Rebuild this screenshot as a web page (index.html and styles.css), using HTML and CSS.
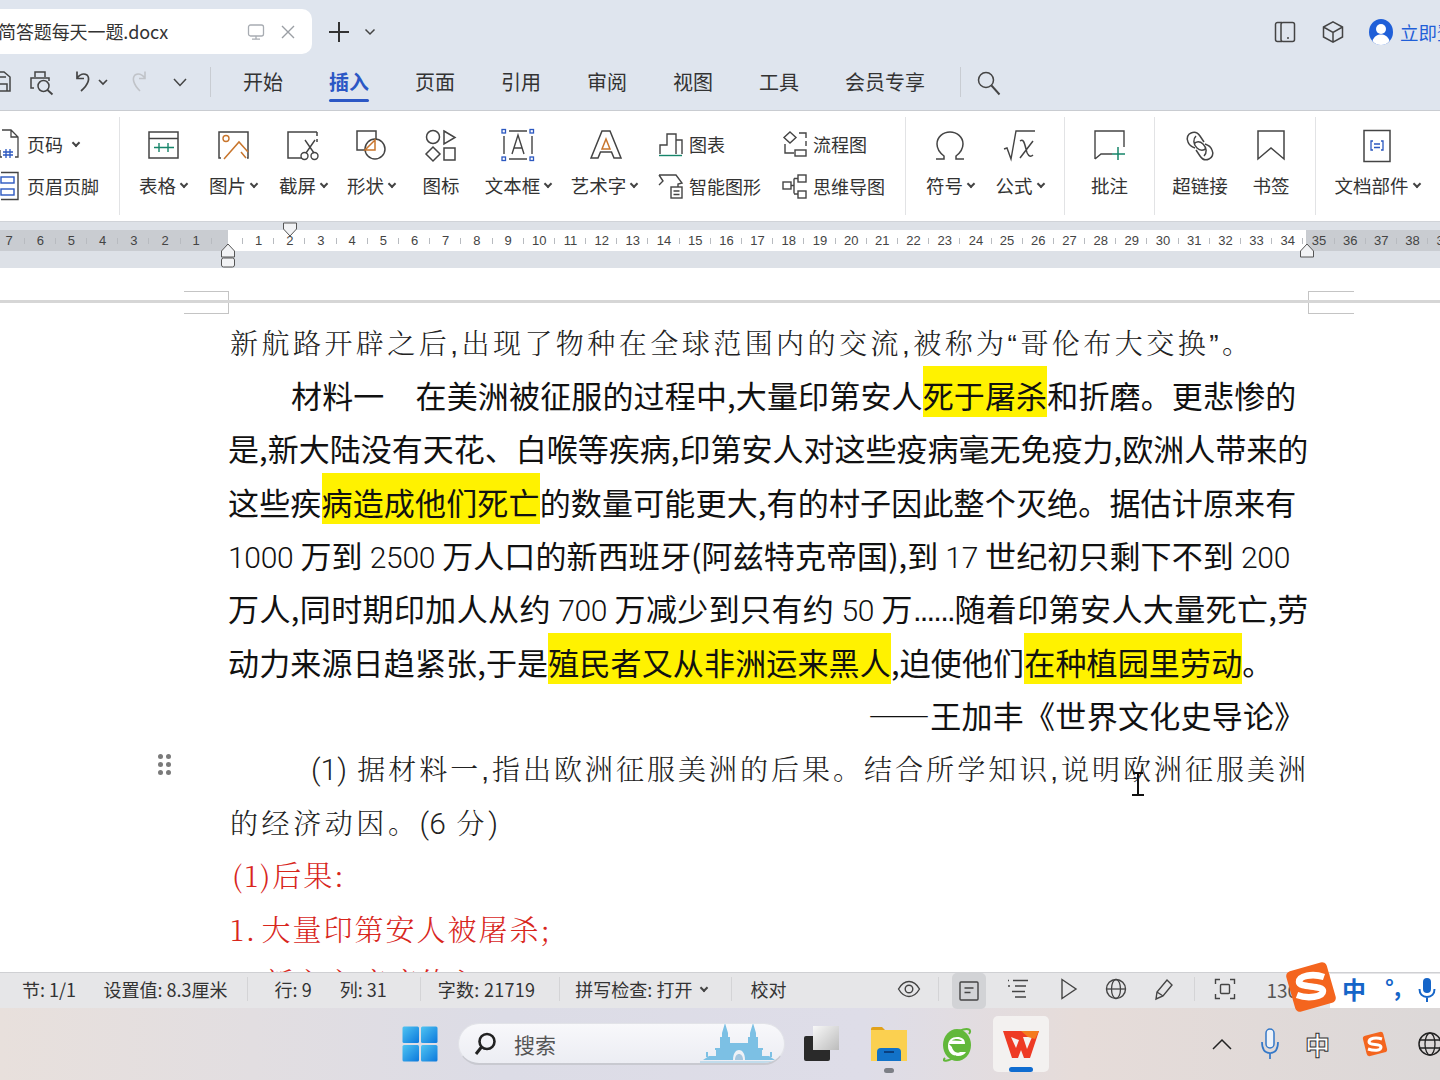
FILE: index.html
```html
<!DOCTYPE html>
<html lang="zh">
<head>
<meta charset="utf-8">
<title>简答题每天一题.docx</title>
<link rel="stylesheet" href="styles.css">
</head>
<body>
<div class="app">
  <header class="top">
    <div class="tabbar">
      <div class="tab">
        <span class="tab-name">简答题每天一题.docx</span>
        <svg class="tab-ico" width="18" height="18" viewBox="0 0 18 18"><rect x="1.500" y="2" width="15" height="11" rx="2" fill="none" stroke="#a8acb2" stroke-width="1.300"/><path d="M9 13v3M5 16.200h8" stroke="#a8acb2" stroke-width="1.300" fill="none"/></svg>
        <svg class="tab-ico tab-x" width="16" height="16" viewBox="0 0 16 16"><path d="M2 2l12 12M14 2L2 14" stroke="#9a9ea4" stroke-width="1.400"/></svg>
      </div>
      <svg class="plus" width="22" height="22" viewBox="0 0 22 22"><path d="M11 1v20M1 11h20" stroke="#333" stroke-width="2"/></svg>
      <svg class="caret-t" width="12" height="8" viewBox="0 0 12 8"><path d="M1.500 1.500L6 6l4.500-4.500" stroke="#444" stroke-width="1.500" fill="none"/></svg>
      <div class="tab-right">
        <svg width="24" height="24" viewBox="0 0 24 24"><path d="M9 2.500H4.500a2 2 0 00-2 2v15a2 2 0 002 2H9" fill="none" stroke="#444" stroke-width="1.500"/><rect x="8" y="2.500" width="13.500" height="19" rx="2" fill="none" stroke="#444" stroke-width="1.500"/><circle cx="15" cy="18" r="1" fill="#444"/></svg>
        <svg width="24" height="24" viewBox="0 0 24 24"><path d="M12 1.800l9.500 5.200v10L12 22.200 2.500 17V7zM2.500 7l9.500 5.500L21.500 7M12 12.500v9.700" fill="none" stroke="#444" stroke-width="1.500"/></svg>
        <svg class="avatar" width="24" height="26" viewBox="0 0 24 26"><ellipse cx="12" cy="13" rx="12" ry="13" fill="#1f5fd8"/><circle cx="12" cy="10" r="5" fill="#fff"/><path d="M3.500 22c1.500-5 5-6.500 8.500-6.500s7 1.500 8.500 6.500c-2 2.500-5 4-8.500 4s-6.500-1.500-8.500-4z" fill="#fff"/></svg>
        <span class="login">立即登录</span>
      </div>
    </div>
    <div class="menubar">
      <svg class="q q-save" width="12" height="24" viewBox="0 0 12 24"><path d="M-6 2h10l6 5v14H-6zM-2 21v-7H7v7M-1 2v5h7" fill="none" stroke="#444" stroke-width="1.500"/></svg>
      <svg class="q q-prev" width="26" height="26" viewBox="0 0 26 26"><path d="M6 7V2h10v5M5 18H2V8h18v3" fill="none" stroke="#444" stroke-width="1.500"/><circle cx="14.500" cy="16" r="5.500" fill="#dfe5ee" stroke="#444" stroke-width="1.500"/><path d="M18.500 20l5 4.500" stroke="#444" stroke-width="1.800"/></svg>
      <svg class="q q-undo" width="20" height="24" viewBox="0 0 20 24"><path d="M4 1.500v7h7M4 8c3-4 7-5 10-3 3 3 2 9-6 16" fill="none" stroke="#444" stroke-width="1.700"/></svg>
      <svg class="q q-c1" width="10" height="8" viewBox="0 0 10 8"><path d="M1 2l4 4 4-4" stroke="#444" stroke-width="1.700" fill="none"/></svg>
      <svg class="q q-redo" width="18" height="24" viewBox="0 0 18 24"><path d="M15 1.500v7H9M15 8C12 4 8 3 5 5c-3 3-2 9 5 16" fill="none" stroke="#c0c3c8" stroke-width="1.600"/></svg>
      <svg class="q q-c2" width="14" height="9" viewBox="0 0 14 9"><path d="M1 1l6 6.500L13 1" stroke="#444" stroke-width="1.500" fill="none"/></svg>
      <span class="vsep vsep-a"></span>
      <nav class="menus">
        <span>开始</span><span class="on">插入</span><span>页面</span><span>引用</span><span>审阅</span><span>视图</span><span>工具</span><span>会员专享</span>
      </nav>
      <span class="vsep vsep-b"></span>
      <svg class="q-search" width="26" height="26" viewBox="0 0 26 26"><circle cx="10" cy="10" r="7.500" fill="none" stroke="#444" stroke-width="1.500"/><path d="M15.500 15.500l8 9" stroke="#444" stroke-width="1.900"/></svg>
    </div>
  </header>

  <section class="ribbon">
    <div class="g g0">
      <div class="sm sm-a">
        <svg class="ico-s clip" width="22" height="32" viewBox="0 0 22 32"><path d="M4 2h9l7 7v20h-3M13 2v7h7M2 22v7h2" fill="none" stroke="#444" stroke-width="1.300"/><path d="M8 21v9M12 21v9M5 24h10M5 27h10" stroke="#2c58c0" stroke-width="1.300"/></svg>
        <span>页码</span><i class="c c-a"></i>
      </div>
      <div class="sm sm-b">
        <svg class="ico-s clip2" width="22" height="32" viewBox="0 0 22 32"><path d="M2 2.500h17v27H2" fill="none" stroke="#444" stroke-width="1.400"/><rect x="2" y="7" width="13" height="6" fill="none" stroke="#2c58c0" stroke-width="1.400"/><rect x="2" y="19" width="13" height="6" fill="none" stroke="#2c58c0" stroke-width="1.400"/></svg>
        <span>页眉页脚</span>
      </div>
    </div>
    <div class="g g1">
      <div class="ri w70"><svg width="36" height="36" viewBox="0 0 36 36"><rect x="4" y="4" width="29" height="26" fill="none" stroke="#444" stroke-width="1.500"/><path d="M4 10.500h29" stroke="#444" stroke-width="1.500"/><path d="M9 19.500h20M14 15v9M23 15v9" stroke="#16856a" stroke-width="1.400"/></svg><label>表格<i class="c"></i></label></div>
      <div class="ri w70"><svg width="36" height="36" viewBox="0 0 36 36"><path d="M6 30H4V4h29v26h-1" fill="none" stroke="#444" stroke-width="1.500"/><circle cx="11" cy="10.500" r="3" fill="none" stroke="#c8752c" stroke-width="1.400"/><path d="M9 31L24 14l9 10M26 24l5 6" fill="none" stroke="#c8752c" stroke-width="1.500"/></svg><label>图片<i class="c"></i></label></div>
      <div class="ri w70"><svg width="36" height="36" viewBox="0 0 36 36"><path d="M17 30H3V4h29M32 4v4M32 11v3M7 30h1M11 30h1" fill="none" stroke="#444" stroke-width="1.500"/><path d="M20 12l9 13M30 12l-9 13" stroke="#444" stroke-width="1.400"/><circle cx="19.500" cy="28" r="3.500" fill="none" stroke="#444" stroke-width="1.400"/><circle cx="29.500" cy="28" r="3.500" fill="none" stroke="#444" stroke-width="1.400"/></svg><label>截屏<i class="c"></i></label></div>
      <div class="ri w66"><svg width="36" height="36" viewBox="0 0 36 36"><path d="M12 22H4V3h19v9" fill="none" stroke="#444" stroke-width="1.500"/><circle cx="22" cy="21" r="10" fill="none" stroke="#444" stroke-width="1.500"/><path d="M22 12v10H12z" fill="#fff" stroke="#c8752c" stroke-width="1.500"/></svg><label>形状<i class="c"></i></label></div>
      <div class="ri w74"><svg width="36" height="36" viewBox="0 0 36 36"><circle cx="10" cy="9" r="6.500" fill="none" stroke="#444" stroke-width="1.500"/><path d="M21 3l11 6.500L21 16zM10 19l7 7-7 7-7-7zM21 20h11v12H21z" fill="none" stroke="#444" stroke-width="1.500"/></svg><label>图标</label></div>
      <div class="ri w80"><svg width="36" height="36" viewBox="0 0 36 36"><path d="M9 3h18M9 31h18M4 8v18M32 8v18" fill="none" stroke="#444" stroke-width="1.400"/><path d="M12 26l6-19 6 19M14 20h8" fill="none" stroke="#444" stroke-width="1.400"/><g fill="#fff" stroke="#2c58c0" stroke-width="1.300"><rect x="2" y="1.500" width="3.500" height="3.500"/><rect x="30" y="1.500" width="3.500" height="3.500"/><rect x="2" y="29" width="3.500" height="3.500"/><rect x="30" y="29" width="3.500" height="3.500"/></g></svg><label>文本框<i class="c"></i></label></div>
      <div class="ri w92"><svg class="sh4" width="36" height="36" viewBox="0 0 36 36"><path d="M3 30L14 3h8l11 27h-7l-2.500-6h-11L10 30z" fill="none" stroke="#444" stroke-width="1.500"/><path d="M18 11l4 10h-8z" fill="none" stroke="#c8752c" stroke-width="1.500"/></svg><label>艺术字<i class="c"></i></label></div>
      <div class="two two-a">
        <div class="sm"><svg class="ico-m" width="26" height="26" viewBox="0 0 26 26"><path d="M2 23v-9h7V3h9v20M18 9h6v14" fill="none" stroke="#444" stroke-width="1.400"/><path d="M1 24.500h23" stroke="#16856a" stroke-width="1.400"/></svg><span>图表</span></div>
        <div class="sm"><svg class="ico-m" width="26" height="26" viewBox="0 0 26 26"><path d="M1 2h17l6 8-4 1v3M1 2l4 6-4 4" fill="none" stroke="#444" stroke-width="1.400"/><rect x="13" y="14" width="11" height="11" fill="none" stroke="#444" stroke-width="1.400"/><path d="M15.500 18h6M15.500 21.500h6" stroke="#444" stroke-width="1.300"/></svg><span>智能图形</span></div>
      </div>
      <div class="two two-b">
        <div class="sm"><svg class="ico-m" width="26" height="26" viewBox="0 0 26 26"><path d="M8 1l6 5.500L8 12 2 6.500z" fill="none" stroke="#444" stroke-width="1.400"/><path d="M3 13v9h9M17 2h7v5M24 10v5" fill="none" stroke="#444" stroke-width="1.400"/><rect x="13" y="19" width="11" height="6" fill="none" stroke="#444" stroke-width="1.400"/></svg><span>流程图</span></div>
        <div class="sm"><svg class="ico-m" width="26" height="26" viewBox="0 0 26 26"><rect x="1" y="9" width="8" height="7" fill="none" stroke="#444" stroke-width="1.400"/><rect x="16" y="2" width="8" height="7" fill="none" stroke="#444" stroke-width="1.400"/><rect x="16" y="18" width="8" height="7" fill="none" stroke="#444" stroke-width="1.400"/><path d="M9 12.500h3M12 5.500v15M12 5.500h4M12 21h4" fill="none" stroke="#444" stroke-width="1.400"/></svg><span>思维导图</span></div>
      </div>
    </div>
    <div class="g g2">
      <div class="ri w70"><svg width="36" height="36" viewBox="0 0 36 36"><path d="M4 31h8v-3c-4-3-7-7-7-12 0-7 6-12 13-12s13 5 13 12c0 5-3 9-7 12v3h8" fill="none" stroke="#444" stroke-width="1.500"/></svg><label>符号<i class="c"></i></label></div>
      <div class="ri w69"><svg width="36" height="36" viewBox="0 0 36 36"><path d="M2 21l3-1 4 11 5-28h19" fill="none" stroke="#444" stroke-width="1.400"/><path d="M18 13c3-2 4 0 6 8 1 6 4 9 7 6M31 13L18 30" fill="none" stroke="#444" stroke-width="1.500"/></svg><label>公式<i class="c"></i></label></div>
    </div>
    <div class="g g3">
      <div class="ri w89"><svg width="36" height="36" viewBox="0 0 36 36"><path d="M3 31V3h29v16M20 26H9l-6 5" fill="none" stroke="#444" stroke-width="1.400"/><path d="M26 19v13M20 26h13" stroke="#16856a" stroke-width="1.500"/></svg><label>批注</label></div>
    </div>
    <div class="g g4">
      <div class="ri w72"><svg width="36" height="36" viewBox="0 0 36 36"><path d="M13 20c-3-1-6-3-7-6-2-4 0-8 3-9 4-2 7 0 9 3l4 6M23 16c3 1 6 3 7 6 2 4 0 8-3 9-4 2-7 0-9-3l-4-6M14 8c-3 3-3 8 1 12 3 3 7 3 9 0M22 28c3-3 3-8-1-12-3-3-7-3-9 0" fill="none" stroke="#444" stroke-width="1.500"/></svg><label>超链接</label></div>
      <div class="ri w70"><svg width="36" height="36" viewBox="0 0 36 36"><path d="M5 3h26v28L18 20 5 31z" fill="none" stroke="#444" stroke-width="1.500"/></svg><label>书签</label></div>
    </div>
    <div class="g g5">
      <div class="ri w122"><svg width="36" height="36" viewBox="0 0 36 36"><rect x="5" y="2.500" width="26" height="31" fill="none" stroke="#444" stroke-width="1.500"/><path d="M14 13h-2v9h2M22 13h2v9h-2M15 16h6M15 19.500h6" fill="none" stroke="#2c58c0" stroke-width="1.300"/></svg><label>文档部件<i class="c"></i></label></div>
    </div>
  </section>

  <section class="ruler">
    <div class="band">
      <div class="ticks">
        <span>7</span><span>6</span><span>5</span><span>4</span><span>3</span><span>2</span><span>1</span><span></span><span>1</span><span>2</span><span>3</span><span>4</span><span>5</span><span>6</span><span>7</span><span>8</span><span>9</span><span>10</span><span>11</span><span>12</span><span>13</span><span>14</span><span>15</span><span>16</span><span>17</span><span>18</span><span>19</span><span>20</span><span>21</span><span>22</span><span>23</span><span>24</span><span>25</span><span>26</span><span>27</span><span>28</span><span>29</span><span>30</span><span>31</span><span>32</span><span>33</span><span>34</span><span>35</span><span>36</span><span>37</span><span>38</span><span>39</span>
      </div>
    </div>
    <svg class="mk mk-top" width="16" height="15" viewBox="0 0 16 15"><path d="M1.500 1h13v6L8 14 1.500 7z" fill="#f2f3f5" stroke="#555" stroke-width="1"/></svg>
    <svg class="mk mk-left" width="16" height="25" viewBox="0 0 16 25"><path d="M1.500 14V8L8 1l6.500 7v6z" fill="#f2f3f5" stroke="#555"/><rect x="1.500" y="15" width="13" height="9" rx="2" fill="#f2f3f5" stroke="#555"/></svg>
    <svg class="mk mk-right" width="16" height="15" viewBox="0 0 16 15"><path d="M1.500 14V8L8 1l6.500 7v6z" fill="#f2f3f5" stroke="#555"/></svg>
  </section>

  <main class="doc">
    <div class="mark mark-l"></div>
    <div class="mark mark-r"></div>
    <div class="page-line"></div>
    <div class="drag"><i></i><i></i><i></i><i></i><i></i><i></i></div>
    <svg class="ibeam" width="14" height="24" viewBox="0 0 14 24"><path d="M2 1h10M7 1v22M1 23h12" stroke="#111" stroke-width="2" fill="none"/></svg>
    <div class="lines">
      <p class="ln thin l1">新航路开辟之后<span class="lat">,</span>出现了物种在全球范围内的交流<span class="lat">,</span>被称为<span class="lat">“</span>哥伦布大交换<span class="lat">”</span>。</p>
      <p class="ln l2">材料一　在美洲被征服的过程中,大量印第安人<span class="hl">死于屠杀</span>和折磨。更悲惨的</p>
      <p class="ln l3">是,新大陆没有天花、白喉等疾病,印第安人对这些疫病毫无免疫力,欧洲人带来的</p>
      <p class="ln l4">这些疾<span class="hl">病造成他们死亡</span>的数量可能更大,有的村子因此整个灭绝。据估计原来有</p>
      <p class="ln l5"><span class="n">1000</span> 万到 <span class="n">2500</span> 万人口的新西班牙(阿兹特克帝国),到 <span class="n">17</span> 世纪初只剩下不到 <span class="n">200</span></p>
      <p class="ln l3">万人,同时期印加人从约 <span class="n">700</span> 万减少到只有约 <span class="n">50</span> 万<span class="dots">......</span>随着印第安人大量死亡,劳</p>
      <p class="ln l7">动力来源日趋紧张,于是<span class="hl">殖民者又从非洲运来黑人</span>,迫使他们<span class="hl">在种植园里劳动</span>。</p>
      <p class="ln l8">——王加丰《世界文化史导论》</p>
      <p class="ln thin l9"><span class="n">(1)</span> 据材料一<span class="lat">,</span>指出欧洲征服美洲的后果。结合所学知识<span class="lat">,</span>说明欧洲征服美洲</p>
      <p class="ln thin l10">的经济动因。<span class="n">(6</span> 分<span class="n">)</span></p>
      <p class="ln red l11">(1)后果:</p>
      <p class="ln red l12">1. 大量印第安人被屠杀;</p>
      <p class="ln red l12">2. 新六六疾病传入;</p>
    </div>
  </main>

  <footer class="status">
    <span class="st s1">节: 1/1</span>
    <span class="st s2">设置值: 8.3厘米</span>
    <span class="st s3">行: 9</span>
    <span class="st s4">列: 31</span>
    <span class="st s5">字数: 21719</span>
    <span class="st s6">拼写检查: 打开<i class="c c-st"></i></span>
    <span class="st s7">校对</span>
    <svg class="sico i-eye" width="24" height="18" viewBox="0 0 24 18"><path d="M1.500 9C5 3 9 1.500 12 1.500S19 3 22.500 9C19 15 15 16.500 12 16.500S5 15 1.500 9z" fill="none" stroke="#444" stroke-width="1.400"/><circle cx="12" cy="9" r="3.800" fill="none" stroke="#444" stroke-width="1.400"/></svg>
    <span class="stsep sep-a"></span>
    <div class="st-active"><svg width="20" height="20" viewBox="0 0 20 20"><rect x="1" y="1" width="18" height="18" rx="1" fill="none" stroke="#444" stroke-width="1.400"/><path d="M5.500 7h9M5.500 11.500h6" stroke="#444" stroke-width="1.400"/></svg></div>
    <svg class="sico i-list" width="22" height="20" viewBox="0 0 22 20"><path d="M6 1.500h15M1 7h2M8 7h11M5 12.500h13M8 18h11M1 1.500h1" stroke="#444" stroke-width="1.400"/></svg>
    <svg class="sico i-play" width="18" height="22" viewBox="0 0 18 22"><path d="M2 1.500L16 11 2 20.500z" fill="none" stroke="#444" stroke-width="1.400"/></svg>
    <svg class="sico i-globe" width="22" height="22" viewBox="0 0 22 22"><circle cx="11" cy="11" r="9.500" fill="none" stroke="#444" stroke-width="1.400"/><ellipse cx="11" cy="11" rx="4.500" ry="9.500" fill="none" stroke="#444" stroke-width="1.300"/><path d="M1.500 11h19" stroke="#444" stroke-width="1.300"/></svg>
    <svg class="sico i-pen" width="22" height="24" viewBox="0 0 22 24"><path d="M14 3l5 5-9 11-7 3 1-7zM4 15l6 4" fill="none" stroke="#444" stroke-width="1.400"/></svg>
    <span class="stsep sep-b"></span>
    <svg class="sico i-fit" width="22" height="22" viewBox="0 0 22 22"><path d="M1.500 6V1.500H6M16 1.500h4.500V6M20.500 16v4.500H16M6 20.500H1.500V16" fill="none" stroke="#444" stroke-width="1.400"/><rect x="6.500" y="6.500" width="9" height="9" rx="1" fill="none" stroke="#444" stroke-width="1.400"/></svg>
    <span class="st s8">130%</span>
    <div class="ime">
      <span class="ime-zh">中</span>
      <span class="ime-p">°,</span>
      <svg class="ime-mic" width="18" height="26" viewBox="0 0 18 26"><rect x="5" y="1" width="8" height="15" rx="4" fill="#1565c8"/><path d="M1.500 12c0 5 3 8 7.500 8s7.500-3 7.500-8M9 20v5" fill="none" stroke="#1565c8" stroke-width="2"/></svg>
    </div>
    <svg class="sogou" width="50" height="50" viewBox="0 0 50 50"><rect x="4" y="4" width="42" height="42" rx="5" transform="rotate(-16 25 25)" fill="#f4651e"/><path d="M38 15C26 11 13 14 13 20c0 6 24 3 24 9 0 6-15 8-26 4" fill="none" stroke="#fff" stroke-width="6.500"/></svg>
  </footer>

  <div class="taskbar">
    <svg class="win" width="36" height="36" viewBox="0 0 36 36"><defs><linearGradient id="wg" x1="0" y1="0" x2="1" y2="1"><stop offset="0" stop-color="#4fc4f2"/><stop offset="1" stop-color="#0b78dc"/></linearGradient></defs><rect x="0.500" y="0.500" width="16.500" height="16.500" rx="1.500" fill="url(#wg)"/><rect x="19" y="0.500" width="16.500" height="16.500" rx="1.500" fill="url(#wg)"/><rect x="0.500" y="19" width="16.500" height="16.500" rx="1.500" fill="url(#wg)"/><rect x="19" y="19" width="16.500" height="16.500" rx="1.500" fill="url(#wg)"/></svg>
    <div class="search">
      <svg width="26" height="26" viewBox="0 0 26 26"><circle cx="14" cy="10.500" r="7.500" fill="none" stroke="#222" stroke-width="2.600"/><path d="M8.500 16L3 23" stroke="#222" stroke-width="3"/></svg>
      <span>搜索</span>
      <svg class="sky" width="84" height="42" viewBox="0 0 84 42"><g fill="#7cc0e4"><path d="M25 1l3 10v4h2v23h-10V15h2v-4zM53 1l3 10v4h2v23H48V15h2v-4z"/><path d="M30 21h18v17H30z"/><path d="M3 38l6-4h7v-6h-1v-2h5v12zM75 38l-6-4h-7v-6h1v-2h-5v12z"/><rect x="6" y="30" width="2" height="5"/><rect x="70" y="30" width="2" height="5"/></g><path d="M33 38c0-7 3-10 6-10s6 3 6 10z" fill="#eef1f6"/><path d="M35 38c0-4 2-6 4-6s4 2 4 6z" fill="#5a9cc8" opacity=".5"/><path d="M0 40h76" stroke="#b3d6ea" stroke-width="1.500"/></svg>
    </div>
    <div class="app-ico a-desk"><i class="d1"></i><i class="d2"></i></div>
    <div class="app-ico a-folder"><svg width="36" height="36" viewBox="0 0 36 36"><path d="M0 3a2 2 0 012-2h9l4 4H0z" fill="#e2a21a"/><rect x="0" y="4" width="36" height="31" fill="#fbd050"/><path d="M6 35v-9a4 4 0 014-4h16a4 4 0 014 4v9z" fill="#1272c8"/><path d="M13 26h10" stroke="#0a3f7e" stroke-width="2"/></svg><b class="pip"></b></div>
    <div class="app-ico a-ie"><svg width="36" height="38" viewBox="0 0 36 38"><ellipse cx="18" cy="20" rx="14" ry="16" fill="#62b83a"/><path d="M10 19h16c0-5-3-7-8-7s-9 3-9 9 4 10 10 10c4 0 7-2 8-4h-6c-1 1-4 1-6-1-1-1-2-3-2-4z M13 15.500c1-1 3-1.500 5-1.500 3 0 4 1 5 2z" fill="#fff" fill-rule="evenodd"/><path d="M6 33C2 37 9 37 17 31M30 9c3-4 0-7-10-3" fill="none" stroke="#62b83a" stroke-width="2"/></svg></div>
    <div class="app-ico a-wps"><svg width="38" height="30" viewBox="0 0 38 30"><path d="M1 2h36l-9 27h-6l-3-8-3 8h-6z" fill="#ee3a24"/><path d="M9 8l5 11 3-8zM21 8h9l-5 12z" fill="#f4f2f1"/><path d="M19 2h18l-4 8-7-2z" fill="#f47b20"/></svg><b class="active-bar"></b></div>
    <div class="tray">
      <svg class="t-up" width="20" height="12" viewBox="0 0 20 12"><path d="M1 11l9-9 9 9" fill="none" stroke="#222" stroke-width="1.500"/></svg>
      <svg class="t-mic" width="20" height="32" viewBox="0 0 20 32"><rect x="6" y="1" width="8" height="19" rx="4" fill="#eef3fa" stroke="#3478c8" stroke-width="1.500"/><path d="M2 14c0 7 3 11 8 11s8-4 8-11M10 25v6" fill="none" stroke="#3478c8" stroke-width="1.700"/></svg>
      <span class="t-zh">中</span>
      <svg class="t-s" width="26" height="26" viewBox="0 0 26 26"><rect x="2.500" y="2.500" width="21" height="21" rx="3" transform="rotate(-14 13 13)" fill="#f4651e"/><path d="M20 8c-6-2-13-1-13 3s12 1 12 5-7 4-13 2" fill="none" stroke="#fff" stroke-width="3"/></svg>
      <svg class="t-g" width="26" height="26" viewBox="0 0 26 26"><circle cx="13" cy="13" r="11" fill="none" stroke="#222" stroke-width="1.500"/><ellipse cx="13" cy="13" rx="5" ry="11" fill="none" stroke="#222" stroke-width="1.300"/><path d="M2 9h22M2 17h22" stroke="#222" stroke-width="1.300"/></svg>
    </div>
  </div>
</div>
</body>
</html>
```
FILE: styles.css
```css
* { box-sizing: border-box; }
html, body { margin: 0; padding: 0; }
body { width: 1440px; height: 1080px; overflow: hidden; font-family: "Noto Sans CJK SC", "Noto Sans", sans-serif; color: #333; }
p { margin: 0; }
i, b { display: block; }
label { display: block; }
.app { width: 1440px; height: 1080px; display: flex; flex-direction: column; overflow: hidden; }

/* title + menu */
.top { height: 111px; background: #dfe5ee; border-bottom: 1px solid #c9ccd1; flex: none; }
.tabbar { height: 54px; display: flex; align-items: center; padding-top: 9px; }
.tab { width: 312px; height: 45px; background: #fff; border-radius: 0 10px 10px 0; display: flex; align-items: center; overflow: hidden; }
.tab-name { font-size: 18px; width: 249px; margin-left: -2px; white-space: nowrap; flex: none; color: #333; letter-spacing: -0.100px; margin-top: -2px; }
.tab-ico { flex: none; }
.tab-x { margin-left: 15px; }
.plus { margin-left: 16px; flex: none; }
.caret-t { margin-left: 14px; flex: none; }
.tab-right { margin-left: auto; display: flex; align-items: center; width: 167px; gap: 24px; overflow: hidden; flex: none; height: 30px; white-space: nowrap; }
.tab-right svg { flex: none; }
.tab-right .avatar { margin-right: -17px; }
.login { font-size: 18.500px; color: #1f5fd8; flex: none; }
.menubar { height: 56px; display: flex; align-items: center; }
.q { flex: none; }
.q-prev { margin-left: 17px; margin-top: 2px; }
.q-undo { margin-left: 18px; }
.q-c1 { margin-left: 5px; }
.q-redo { margin-left: 22px; }
.q-c2 { margin-left: 25px; }
.vsep { width: 1px; height: 30px; background: #c8ccd2; flex: none; }
.vsep-a { margin-left: 23px; }
.menus { display: flex; gap: 46px; margin-left: 32px; font-size: 20px; color: #333; flex: none; }
.menus span { display: block; line-height: 56px; height: 56px; position: relative; }
.menus .on { color: #2b57c5; font-weight: 700; }
.menus .on::after { content: ""; position: absolute; left: 0; right: 0; bottom: 8px; height: 3px; background: #2b57c5; border-radius: 2px; }
.vsep-b { margin-left: 35px; }
.q-search { margin-left: 15px; flex: none; margin-top: 2px; }

/* ribbon */
.ribbon { height: 111px; background: #fff; display: flex; flex: none; padding-top: 6px; padding-bottom: 7px; border-bottom: 1px solid #d0d3d8; }
.g { border-right: 1px solid #e2e3e5; height: 98px; display: flex; flex: none; padding-top: 11px; }
.g0 { width: 120px; flex-direction: column; padding-top: 6px; overflow: hidden; }
.g1 { width: 786px; padding-left: 8px; }
.g2 { width: 159px; padding-left: 9px; }
.g3 { width: 90px; }
.g4 { width: 161px; padding-left: 9px; }
.g5 { width: 124px; border-right: 0; }
.ri { display: flex; flex-direction: column; align-items: center; flex: none; font-size: 18.500px; color: #333; }
.ri label { margin-top: 8px; line-height: 26px; height: 26px; white-space: nowrap; display: flex; align-items: center; }
.w66 { width: 66px; } .w69 { width: 69px; } .w70 { width: 70px; } .w72 { width: 72px; } .w74 { width: 74px; } .w80 { width: 80px; } .w89 { width: 89px; } .w92 { width: 92px; } .w122 { width: 122px; }
.c { width: 6px; height: 6px; border-right: 2px solid #444; border-bottom: 2px solid #444; transform: rotate(45deg); margin: -3px 0 0 5px; flex: none; }
.c-a { margin-left: 10px; }
.sm { display: flex; align-items: center; font-size: 18px; height: 42px; white-space: nowrap; color: #333; }
.ico-s { flex: none; margin-right: 4px; }
.clip { margin-left: -2px; margin-right: 7px; }
.clip2 { margin-left: -1px; margin-right: 6px; }
.sh4 { flex: none; margin-left: 4px; }
.two { display: flex; flex-direction: column; flex: none; margin-top: -5px; }
.two-a { width: 124px; margin-left: 8px; }
.two-b { width: 123px; }
.ico-m { flex: none; margin-right: 5px; }

/* ruler */
.ruler { height: 46px; background: #dde1e7; flex: none; padding-top: 8px; position: relative; }
.band { height: 21px; overflow: hidden; background: linear-gradient(to right, #c9ccd1 228px, #fff 228px, #fff 1306px, #c9ccd1 1306px); }
.ticks { display: flex; margin-left: -6.500px; height: 21px; }
.ticks span { flex: none; width: 31.200px; text-align: center; font-size: 13px; line-height: 22px; color: #444; position: relative; font-family: "Liberation Sans", sans-serif; }
.ticks span::after { content: ""; position: absolute; right: 0; top: 8px; height: 6px; width: 1px; background: #b8bbc0; }
.mk { position: absolute; }
.mk-top { left: 282px; top: 0; }
.mk-left { left: 220px; top: 21px; }
.mk-right { left: 1299px; top: 21px; }

/* document */
.doc { height: 704px; flex: none; background: #fff; position: relative; overflow: hidden; }
.page-line { position: absolute; left: 0; right: 0; top: 32px; height: 3px; background: #d6d6d6; }
.mark { position: absolute; top: 23px; height: 23px; border: 1px solid #c4c4c4; }
.mark-l { left: 184px; width: 45px; border-left: 0; }
.mark-r { left: 1308px; width: 46px; border-right: 0; }
.drag { position: absolute; left: 158px; top: 486px; width: 12px; display: grid; grid-template-columns: 5px 5px; gap: 3px 3px; }
.drag i { width: 5px; height: 5px; border-radius: 50%; background: #7a7a7a; }
.ibeam { position: absolute; left: 1131px; top: 504px; }
.lines { padding-top: 46.800px; padding-left: 228px; }
.ln { height: 53.300px; line-height: 53.300px; font-size: 31px; color: #111; white-space: nowrap; text-align: justify; text-align-last: justify; letter-spacing: -0.300px; }
.hl { background: #fff200; padding: 6px 0 0; }
.n { font-family: "Roboto", "Noto Sans", sans-serif; font-weight: 300; font-size: 30px; }
.lat { font-family: "Liberation Sans", sans-serif; }
.dots { font-family: "Liberation Sans", sans-serif; letter-spacing: -1.800px; }
.thin { font-weight: 300; font-size: 28px; color: #222; font-family: "Noto Serif CJK SC", "Noto Sans CJK SC", sans-serif; letter-spacing: 0; }
.red { color: #d8261c; font-size: 29px; font-weight: 300; text-align: left; text-align-last: left; letter-spacing: 2px; font-family: "Noto Serif CJK SC", "Noto Sans CJK SC", sans-serif; }
.l1 { width: 1020px; margin-left: 2px; margin-top: 1.500px; height: 51.800px; }
.l2 { width: 1005px; margin-left: 63px; }
.l3 { width: 1080px; }
.l4 { width: 1068px; }
.l5 { width: 1062px; }
.l7 { width: 1045px; }
.l8 { width: 437px; margin-left: 640px; }
.l9 { width: 1078px; padding-left: 83px; margin-top: 1.300px; height: 52px; }
.l10 { width: 268px; margin-left: 2px; margin-top: 1.300px; height: 52px; }
.l11 { margin-left: 4px; letter-spacing: 2px; }
.l12 { margin-left: 2px; word-spacing: -5px; margin-top: 1px; height: 52.300px; }

/* status */
.status { height: 36px; flex: none; background: #e6e6e8; border-top: 1px solid #cfd0d3; display: flex; align-items: center; position: relative; font-size: 18px; color: #333; padding-bottom: 3px; }
.st { white-space: nowrap; flex: none; display: flex; align-items: center; }
.s1 { margin-left: 22px; }
.s2 { margin-left: 27.500px; padding-right: 19px; border-right: 1px solid #d4d4d6; height: 24px; }
.s3 { margin-left: 27px; }
.s4 { margin-left: 28px; padding-right: 33px; border-right: 1px solid #d4d4d6; height: 24px; }
.s5 { margin-left: 17px; padding-right: 24px; border-right: 1px solid #d4d4d6; height: 24px; letter-spacing: 0.300px; }
.s6 { margin-left: 15px; padding-right: 24px; border-right: 1px solid #d4d4d6; height: 24px; }
.c-st { margin-left: 9px; }
.s7 { margin-left: 18px; }
.sico { flex: none; }
.stsep { width: 1px; height: 24px; background: #d4d4d6; flex: none; }
.sep-a { margin-left: 17px; }
.sep-b { margin-left: 19px; }
.i-eye { margin-left: 111px; }
.st-active { width: 34px; height: 36px; margin-left: 13px; margin-bottom: -3px; background: #d2d3d6; border-radius: 5px; display: flex; align-items: center; justify-content: center; flex: none; }
.i-list { margin-left: 21px; }
.i-play { margin-left: 31px; }
.i-globe { margin-left: 27px; }
.i-pen { margin-left: 26px; }
.i-fit { margin-left: 19px; }
.s8 { margin-left: 30px; font-size: 19px; color: #555; }
.ime { position: absolute; left: 1330px; top: 1px; width: 110px; height: 34px; background: #fff; }
.ime-zh { position: absolute; left: 12px; top: 0; font-size: 24px; font-weight: 700; color: #1565c8; line-height: 30px; }
.ime-p { position: absolute; left: 55px; top: -3px; font-size: 22px; font-weight: 700; color: #1565c8; line-height: 30px; }
.ime-mic { position: absolute; left: 88px; top: 3px; }
.sogou { position: absolute; left: 1286px; top: -11px; }

/* taskbar */
.taskbar { height: 72px; flex: none; background: linear-gradient(to right, #e8e0dc 0%, #dcdce6 35%, #dedde8 60%, #e6dcd9 75%, #dcd8d8 100%); display: flex; align-items: center; padding-left: 402px; }
.win { flex: none; }
.search { width: 327px; height: 42px; margin-left: 20px; border-radius: 21px; background: linear-gradient(to bottom, #f8f8fb, #ecedf3); border: 1px solid #e2e3e8; border-bottom: 2px solid #c8c9d0; display: flex; align-items: center; padding-left: 14px; position: relative; flex: none; overflow: hidden; }
.search span { font-size: 21px; color: #555; margin-left: 15px; }
.sky { position: absolute; right: 0; top: -2px; }
.app-ico { flex: none; position: relative; }
.a-desk { width: 36px; height: 36px; margin-left: 19px; }
.d1 { position: absolute; left: 0; top: 10px; width: 26px; height: 25px; background: #2a2a2a; border-radius: 2px; }
.d2 { position: absolute; left: 9px; top: 0; width: 26px; height: 24px; background: linear-gradient(135deg, #f8f8f8, #bcbcbc); }
.a-folder { width: 36px; height: 36px; margin-left: 31px; }
.pip { position: absolute; left: 13px; top: 42px; width: 10px; height: 5px; border-radius: 3px; background: #7c7f86; }
.a-ie { width: 36px; height: 38px; margin-left: 32px; }
.a-wps { width: 56px; height: 56px; margin-left: 18px; background: #f3f1f0; border-radius: 5px; display: flex; align-items: center; justify-content: center; }
.active-bar { position: absolute; left: 16px; bottom: 0; width: 24px; height: 5px; border-radius: 3px; background: #0f6cd0; }
.tray { position: relative; flex: 1; height: 72px; }
.tray > * { position: absolute; }
.t-up { left: 163px; top: 30px; }
.t-mic { left: 211px; top: 20px; }
.t-zh { left: 256px; top: 21px; font-size: 25px; line-height: 30px; color: #fff; font-weight: 700; -webkit-text-stroke: 1px #333; }
.t-s { left: 313px; top: 23px; }
.t-g { left: 368px; top: 23px; }
```
